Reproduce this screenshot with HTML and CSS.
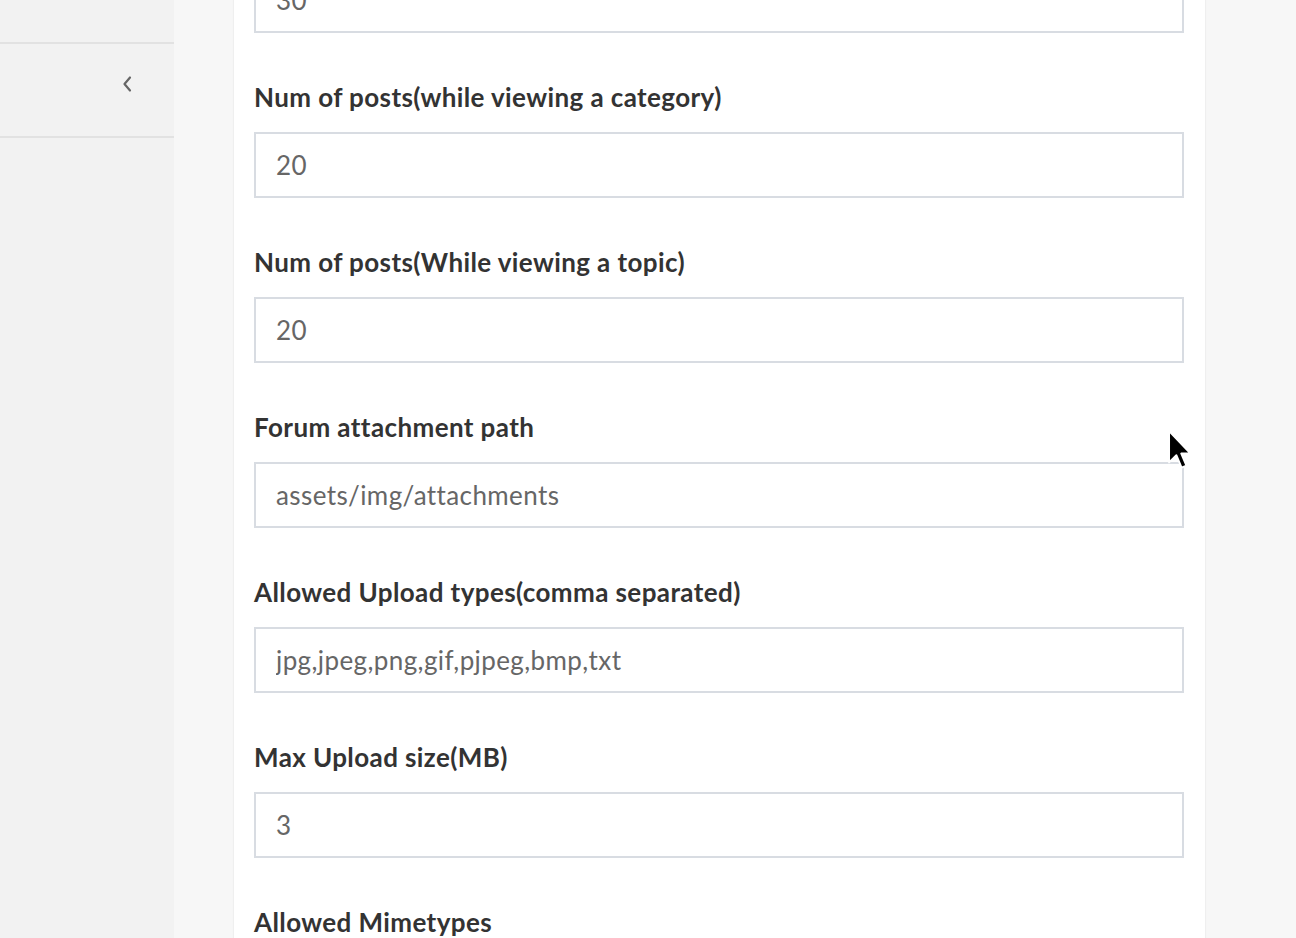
FILE: index.html
```html
<!DOCTYPE html>
<html lang="en">
<head>
<meta charset="utf-8">
<title>Forum settings</title>
<link rel="stylesheet" href="styles.css">
</head>
<body>
<div class="layout">
  <aside class="sidebar">
    <div class="side-row side-top"></div>
    <div class="side-row side-toggle">
      <svg class="chev" width="12" height="18" viewBox="0 0 12 18"><path d="M9 2.5 L3.5 9 L9 15.5" fill="none" stroke="#666" stroke-width="2.2" stroke-linecap="round" stroke-linejoin="round"/></svg>
    </div>
  </aside>
  <main class="main">
    <section class="card">
      <div class="field">
        <input class="input input-first" type="text" value="30">
      </div>
      <div class="field">
        <label class="label">Num of posts(while viewing a category)</label>
        <input class="input" type="text" value="20">
      </div>
      <div class="field">
        <label class="label">Num of posts(While viewing a topic)</label>
        <input class="input" type="text" value="20">
      </div>
      <div class="field">
        <label class="label">Forum attachment path</label>
        <input class="input" type="text" value="assets/img/attachments">
      </div>
      <div class="field">
        <label class="label">Allowed Upload types(comma separated)</label>
        <input class="input" type="text" value="jpg,jpeg,png,gif,pjpeg,bmp,txt">
      </div>
      <div class="field">
        <label class="label">Max Upload size(MB)</label>
        <input class="input" type="text" value="3">
      </div>
      <div class="field">
        <label class="label">Allowed Mimetypes</label>
        <input class="input" type="text" value="">
      </div>
    </section>
  </main>
</div>
<svg class="cursor" width="25" height="44" viewBox="0 0 12 21"><path d="M1 1 L1 16 L4.5 12.5 L7 18.5 L9.3 17.5 L6.8 11.7 L11.3 11.7 Z" fill="#000" stroke="#fff" stroke-width="0.9" stroke-linejoin="round"/></svg>
</body>
</html>
```

FILE: styles.css
```css
* { box-sizing: border-box; }
html, body {
  margin: 0;
  padding: 0;
  height: 100%;
  overflow: hidden;
}
body {
  background: #f7f7f7;
  font-family: Lato, "Liberation Sans", sans-serif;
  color: #333;
}
.layout {
  display: flex;
  height: 938px;
}
.sidebar {
  width: 174px;
  flex: 0 0 174px;
  background: #f2f2f2;
}
.side-row {
  border-bottom: 2px solid #e2e2e2;
}
.side-top {
  height: 44px;
}
.side-toggle {
  height: 94px;
  display: flex;
  align-items: center;
  justify-content: flex-end;
  padding-right: 41px;
  padding-bottom: 12px;
}
.chev { display: block; }
.main {
  flex: 1;
  padding: 0 91px 0 60px;
}
.card {
  background: #fff;
  width: 971px;
  min-height: 1200px;
  margin-top: -102px;
  padding: 0 20px;
  box-shadow: 0 0 2px rgba(0,0,0,0.10);
  display: flex;
  flex-direction: column;
  gap: 47px;
}
.field {
  display: flex;
  flex-direction: column;
}
.label {
  display: block;
  font-weight: 700;
  font-size: 26px;
  letter-spacing: 0.4px;
  line-height: 34px;
  margin-bottom: 18px;
  color: #333;
}
.input {
  display: block;
  width: 930px;
  height: 66px;
  border: 2px solid #d8dce2;
  border-radius: 0;
  padding: 0 20px;
  font-family: Lato, "Liberation Sans", sans-serif;
  font-size: 26px;
  letter-spacing: 0.4px;
  color: #666;
  background: #fff;
  outline: none;
}
.input-first {
  margin-top: 69px;
}
.cursor {
  position: absolute;
  left: 1167px;
  top: 429px;
}
```
